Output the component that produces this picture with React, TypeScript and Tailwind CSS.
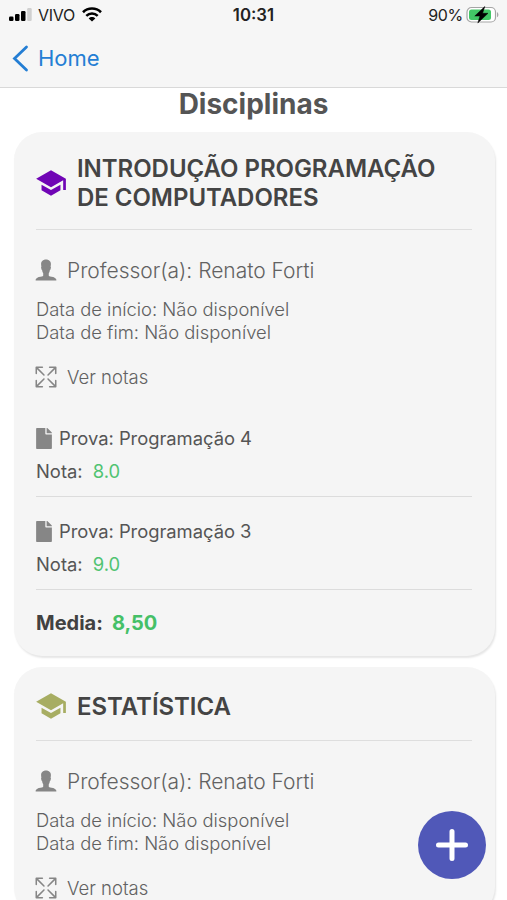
import { FaFile } from "react-icons/fa";
import { IoIosExpand, IoIosPerson, IoMdSchool } from "react-icons/io";

type Exam = {
  name: string;
  grade: string;
};

type Course = {
  title: string;
  teacher: string;
  iconClass: string;
  exams: Exam[];
  average?: string;
};

const courses: Course[] = [
  {
    title: "INTRODUÇÃO PROGRAMAÇÃO DE COMPUTADORES",
    teacher: "Renato Forti",
    iconClass: "text-[#7005b5]",
    exams: [
      { name: "Programação 4", grade: "8.0" },
      { name: "Programação 3", grade: "9.0" },
    ],
    average: "8,50",
  },
  {
    title: "ESTATÍSTICA",
    teacher: "Renato Forti",
    iconClass: "text-[#a7ad62]",
    exams: [],
  },
];

function StatusBar() {
  return (
    <div className="grid h-[29px] grid-cols-3 items-center pl-[9px] pr-[8px] text-[16px] leading-none text-[#222]">
      <div className="flex items-center">
        <svg width="23" height="13" viewBox="0 0 23 13">
          <rect x="0" y="8.5" width="4.5" height="4.5" rx="1.2" fill="#000" />
          <rect x="6" y="6" width="4.5" height="7" rx="1.2" fill="#000" />
          <rect x="12" y="3" width="4.5" height="10" rx="1.2" fill="#000" />
          <rect x="18.2" y="0" width="4.5" height="13" rx="1.2" fill="#d0d0d0" />
        </svg>
        <span className="ml-[6px] tracking-[-0.3px]">VIVO</span>
        <svg className="ml-[7px]" width="20" height="15" viewBox="0 0 20 15">
          <path d="M1 5.2C6 .3 14 .3 19 5.2" fill="none" stroke="#000" strokeWidth="2.6" />
          <path d="M4.3 8.8c3.2-3.2 8.2-3.2 11.4 0" fill="none" stroke="#000" strokeWidth="2.5" />
          <path d="M10 14.6 6.7 11.4c1.8-1.8 4.8-1.8 6.6 0z" fill="#000" />
        </svg>
      </div>
      <div className="pr-[1px] pt-px text-center text-[16.8px] font-semibold">10:31</div>
      <div className="flex items-center justify-end">
        <span className="tracking-[-0.3px]">90%</span>
        <svg className="ml-[3px]" width="33" height="18" viewBox="0 0 33 18">
          <rect x="1" y="1.5" width="28.5" height="14.5" rx="4.5" fill="#fff" stroke="#a5a5a5" strokeWidth="1.2" />
          <rect x="3" y="3.5" width="22" height="10.5" rx="2.5" fill="#42c766" />
          <path d="M31 6.3c1.9.6 1.9 4.3 0 4.9z" fill="#a5a5a5" />
          <path d="M18.8.5 8.8 10h5.2l-2.2 7L22 7.3h-5.4z" fill="#000" stroke="#000" strokeWidth=".5" />
        </svg>
      </div>
    </div>
  );
}

function Header() {
  return (
    <header className="h-[88px] shrink-0 border-b border-[#d9d9d9] bg-[#f6f6f6]">
      <StatusBar />
      <button className="flex h-[58px] items-center pl-[12px] text-[#247ed4]">
        <svg width="17" height="27" viewBox="0 0 17 27">
          <path d="M14.5 2 2.5 13.5 14.5 25" fill="none" stroke="currentColor" strokeWidth="2.8" strokeLinecap="round" />
        </svg>
        <span className="ml-[9px] text-[22px] leading-none">Home</span>
      </button>
    </header>
  );
}

function ExamItem({ name, grade }: Exam) {
  return (
    <div className="h-[93px] border-b border-[#dcdcdc] pt-[23px] text-[18.4px] leading-[22px] text-[#555]">
      <div className="flex h-[22px] items-center">
        <FaFile className="h-[21px] w-[16px] text-[#868686]" />
        <span className="ml-[7px] tracking-[-0.03px]">Prova: {name}</span>
      </div>
      <div className="mt-[11px]">
        Nota: <span className="ml-[5px] text-[#50c371]">{grade}</span>
      </div>
    </div>
  );
}

function CourseCard({ title, teacher, iconClass, exams, average }: Course) {
  return (
    <section className="rounded-[28px] bg-[#f5f5f5] pl-[22px] pr-[23px] pt-[22px] shadow-[1px_2px_2px_rgba(0,0,0,0.1)]">
      <div className="flex items-center border-b border-[#dedede] pb-[17px]">
        <IoMdSchool className={`-ml-[2px] size-[34px] shrink-0 ${iconClass}`} />
        <h2 className="ml-[9px] mr-[10px] text-[24px] font-semibold leading-[29px] tracking-[-0.04px] text-[#444]">
          {title}
        </h2>
      </div>

      <div className="mt-[27px] flex h-[26px] items-center text-[#626262]">
        <IoIosPerson className="-ml-[4px] size-[28px] text-[#868686]" />
        <span className="ml-[7px] text-[21px] font-light leading-none tracking-[-0.02px]">Professor(a): {teacher}</span>
      </div>

      <div className="mt-[15px] text-[18.4px] font-light leading-[23px] text-[#606060]">
        <p>Data de início: Não disponível</p>
        <p>Data de fim: Não disponível</p>
      </div>

      <button className="mt-[20px] flex h-[26px] items-center text-[#626262]">
        <IoIosExpand className="-ml-[4px] size-[28px] text-[#868686]" />
        <span className="ml-[7px] text-[18.5px] font-light leading-none">Ver notas</span>
      </button>

      <div className="mt-[14px]">
        {exams.map((exam) => (
          <ExamItem key={exam.name} {...exam} />
        ))}
      </div>

      {average && (
        <div className="flex h-[66px] items-center text-[20px] font-bold leading-none text-[#414141]">
          Media: <span className="ml-[9px] text-[#45c067]">{average}</span>
        </div>
      )}
    </section>
  );
}

export default function App() {
  return (
    <div className="relative flex h-[900px] w-[507px] flex-col overflow-hidden bg-white font-['Inter',sans-serif]">
      <Header />
      <main className="flex flex-col">
        <h1 className="h-[44px] text-center text-[28px] font-[650] leading-[32px] text-[#555]">Disciplinas</h1>
        <div className="flex flex-col gap-[11px] pl-[14px] pr-[12px]">
          {courses.map((course) => (
            <CourseCard key={course.title} {...course} />
          ))}
        </div>
      </main>

      <button
        aria-label="Adicionar"
        className="absolute left-[418px] top-[811px] flex size-[68px] items-center justify-center rounded-full bg-[#5058b8]"
      >
        <svg width="32" height="32" viewBox="0 0 32 32">
          <path d="M16 2.5v27M2.5 16h27" fill="none" stroke="#fff" strokeWidth="5" strokeLinecap="round" />
        </svg>
      </button>
    </div>
  );
}
